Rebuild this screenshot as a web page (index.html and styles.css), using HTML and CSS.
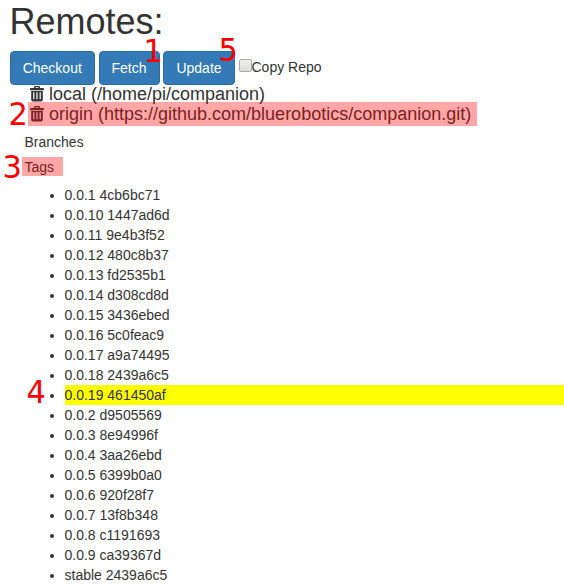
FILE: index.html
```html
<!DOCTYPE html>
<html lang="en">
<head>
<meta charset="utf-8">
<title>Remotes</title>
<link rel="stylesheet" href="styles.css">
</head>
<body>
<svg class="defs" aria-hidden="true">
  <symbol id="trash" viewBox="0 0 14 16">
    <path fill="currentColor" fill-rule="evenodd" d="M4 2V1.2Q4 0 5.2 0H8.8Q10 0 10 1.2V2H12.8Q14 2 14 3.2V4.2H0V3.2Q0 2 1.2 2ZM5.4 2H8.6V1.2H5.4ZM1.2 5H12.8V13.7Q12.8 15.5 11 15.5H3Q1.2 15.5 1.2 13.7ZM3.2 6.3V13.3H4.4V6.3ZM6.4 6.3V13.3H7.6V6.3ZM9.6 6.3V13.3H10.8V6.3Z"/>
  </symbol>
</svg>
<h1>Remotes:</h1>
<div class="toolbar">
  <button class="btn checkout">Checkout</button>
  <button class="btn fetch">Fetch<span class="mark mark-1">1</span></button>
  <button class="btn update">Update<span class="mark mark-5">5</span></button>
  <label class="copy"><span class="box"></span>Copy Repo</label>
</div>
<div class="remote"><svg class="icon"><use href="#trash"/></svg>local (/home/pi/companion)</div>
<div class="remote selected"><span class="mark mark-2">2</span><svg class="icon"><use href="#trash"/></svg>origin (https://github.com/bluerobotics/companion.git)</div>
<div class="section">Branches</div>
<div class="section tags"><span class="mark mark-3">3</span>Tags</div>
<ul>
  <li>0.0.1 4cb6bc71</li>
  <li>0.0.10 1447ad6d</li>
  <li>0.0.11 9e4b3f52</li>
  <li>0.0.12 480c8b37</li>
  <li>0.0.13 fd2535b1</li>
  <li>0.0.14 d308cd8d</li>
  <li>0.0.15 3436ebed</li>
  <li>0.0.16 5c0feac9</li>
  <li>0.0.17 a9a74495</li>
  <li>0.0.18 2439a6c5</li>
  <li class="current">0.0.19 461450af<span class="mark mark-4">4</span></li>
  <li>0.0.2 d9505569</li>
  <li>0.0.3 8e94996f</li>
  <li>0.0.4 3aa26ebd</li>
  <li>0.0.5 6399b0a0</li>
  <li>0.0.6 920f28f7</li>
  <li>0.0.7 13f8b348</li>
  <li>0.0.8 c1191693</li>
  <li>0.0.9 ca39367d</li>
  <li>stable 2439a6c5</li>
</ul>
</body>
</html>
```
FILE: styles.css
```css
* { box-sizing: border-box; }
html { overflow: hidden; }
body {
  margin: 0;
  padding: 2px 0 0 9.5px;
  background: #fff;
  color: #333;
  font: 14px/20px "Liberation Sans", Arial, sans-serif;
}
.defs { position: absolute; width: 0; height: 0; }
h1 { margin: 0; height: 49px; font-size: 36px; font-weight: 400; line-height: 40px; }
.toolbar { display: flex; height: 34px; }
.btn {
  position: relative;
  height: 34px;
  margin: 0 3.5px 0 0;
  padding: 0;
  border: 1px solid #2e6da4;
  border-radius: 4px;
  background: #337ab7;
  color: #fff;
  font: inherit;
}
.checkout { width: 85.5px; }
.fetch { width: 61px; }
.update { width: 72px; }
.copy { display: flex; padding-top: 6px; }
.box {
  width: 13px;
  height: 13px;
  margin: 2px 0 0;
  border: 1px solid #aaa;
  border-radius: 2px;
  background: linear-gradient(#eee, #ddd);
}
.mark {
  position: absolute;
  color: #f00;
  font: 32px/36px "DejaVu Sans", sans-serif;
  transform: scaleX(.95);
}
.mark-1 { left: 43px; top: -19px; }
.mark-5 { left: 54px; top: -20px; }
.mark-2 { left: -20.5px; top: -6px; }
.mark-3 { left: -20px; top: -8px; }
.mark-4 { left: -39px; top: -11px; }
.remote {
  position: relative;
  display: flex;
  width: 449px;
  height: 20px;
  margin-left: 18.5px;
  padding-left: 2px;
  font-size: 18px;
  line-height: 18px;
  white-space: nowrap;
}
.remote:not(.selected) { height: 17px; }
.icon { width: 14px; height: 16px; margin: 1px 5px 0 0; }
.selected {
  height: 24px;
  padding-top: 3px;
  background: rgba(255, 0, 0, .35);
  color: #7b2222;
}
.section { margin: 6px 0 5px 15px; }
.tags {
  position: relative;
  width: 41px;
  height: 19px;
  margin: 5px 0 9px 12.5px;
  padding-left: 2.5px;
  background: #ffa6a6;
  color: #7b2222;
}
ul { margin: 0; padding-left: 55px; }
li { position: relative; }
.current { background: #ff0; }
```
